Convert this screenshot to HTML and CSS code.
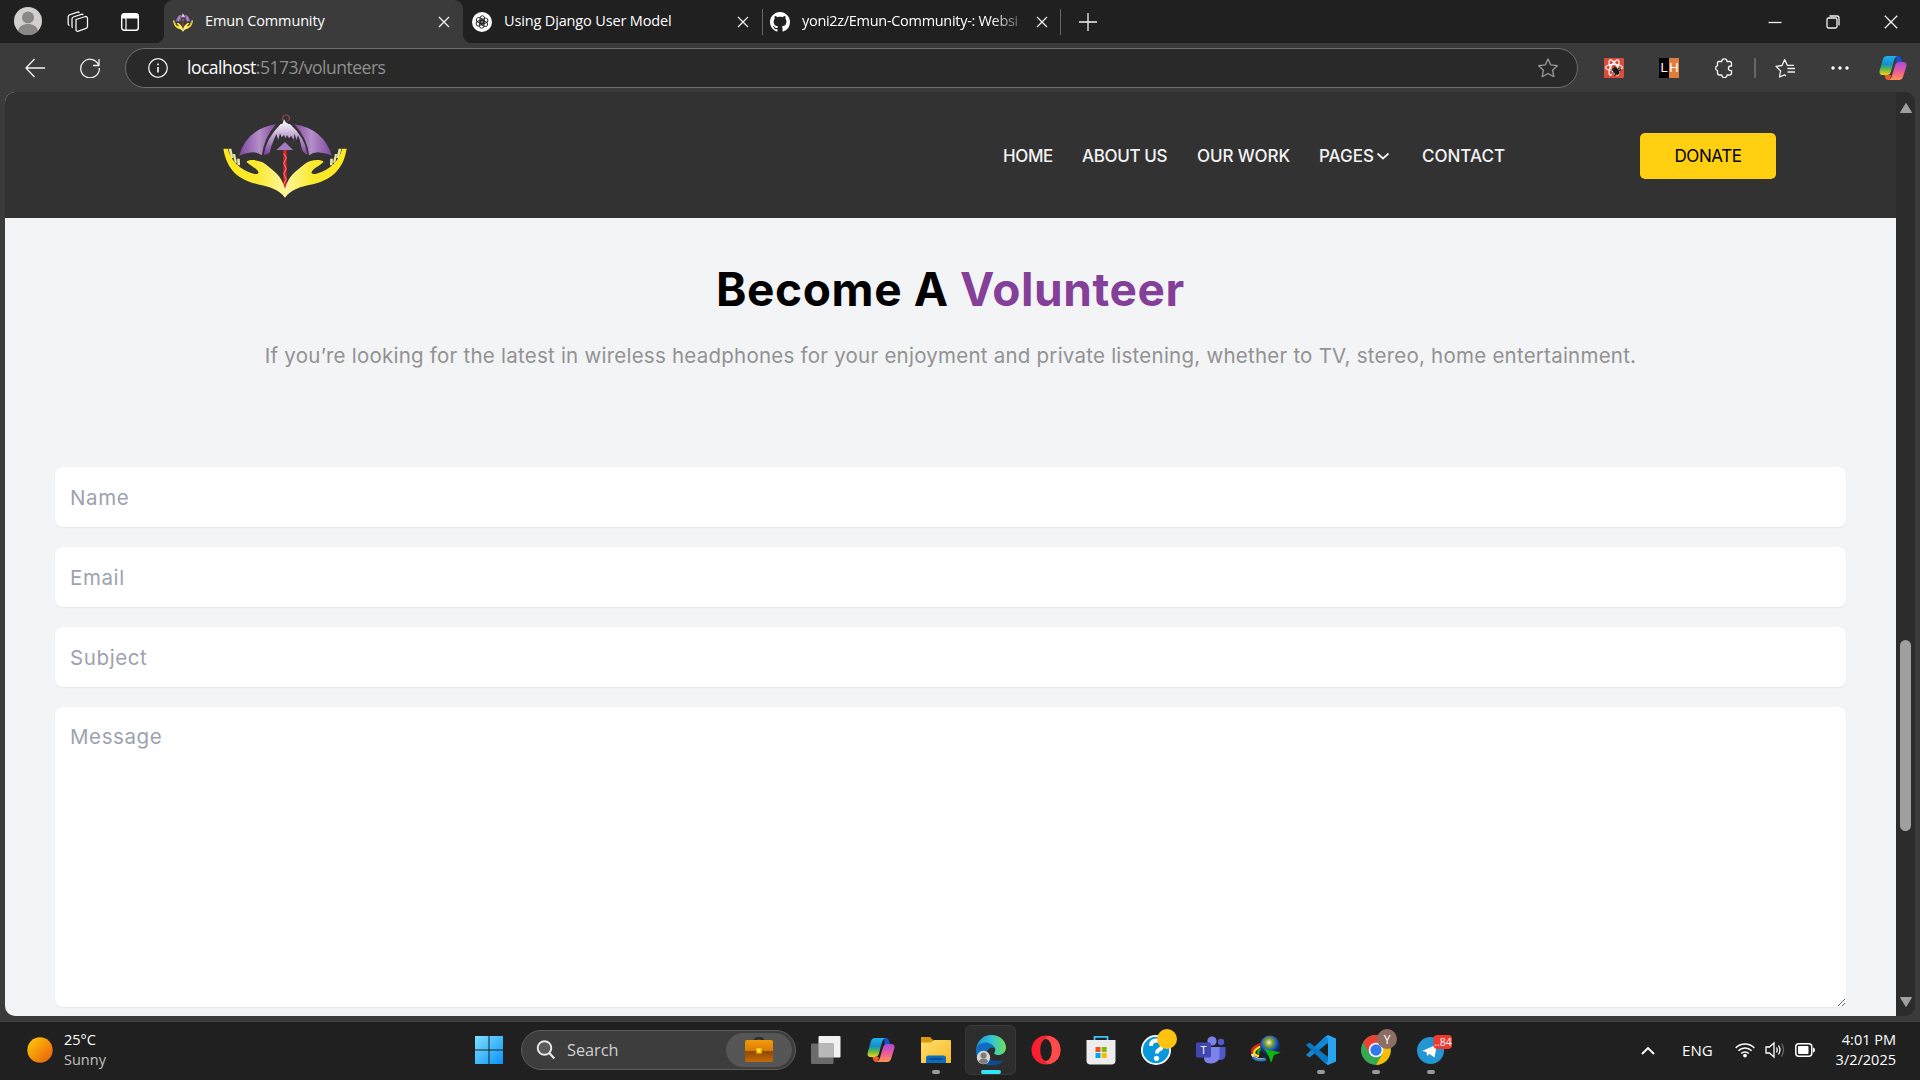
FILE: index.html
```html
<!DOCTYPE html>
<html lang="en">
<head>
<meta charset="utf-8">
<title>Emun Community</title>
<link rel="stylesheet" href="styles.css">
</head>
<body>
<svg class="defs" width="0" height="0" aria-hidden="true">
  <defs>
    <linearGradient id="panelL"><stop offset="0" stop-color="#7f45a0"/><stop offset=".55" stop-color="#b48fc8"/><stop offset="1" stop-color="#8546a0"/></linearGradient>
    <linearGradient id="panelR"><stop offset="0" stop-color="#8546a0"/><stop offset=".45" stop-color="#b48fc8"/><stop offset="1" stop-color="#7f45a0"/></linearGradient>
    <linearGradient id="crown" x2="0" y2="1"><stop offset="0" stop-color="#f2edf6"/><stop offset=".45" stop-color="#b79aca"/><stop offset="1" stop-color="#82409e"/></linearGradient>
    <linearGradient id="handL"><stop offset="0" stop-color="#ffe81a"/><stop offset=".55" stop-color="#fbe92f"/><stop offset="1" stop-color="#fff7a0"/></linearGradient>
    <linearGradient id="handR"><stop offset="0" stop-color="#fff7a0"/><stop offset=".45" stop-color="#fbe92f"/><stop offset="1" stop-color="#ffe81a"/></linearGradient>
    <linearGradient id="cpA" x2="0" y2="1"><stop offset="0" stop-color="#1cb0f0"/><stop offset=".45" stop-color="#1590c8"/><stop offset=".7" stop-color="#5fb944"/><stop offset="1" stop-color="#f5d21c"/></linearGradient>
    <linearGradient id="cpB" x2="0" y2="1"><stop offset="0" stop-color="#a54bdc"/><stop offset=".5" stop-color="#ea5a9c"/><stop offset="1" stop-color="#ff9350"/></linearGradient>
    <linearGradient id="edgeA"><stop offset="0" stop-color="#1e8fe0"/><stop offset=".5" stop-color="#2fc3d8"/><stop offset="1" stop-color="#6fe05a"/></linearGradient>
    <linearGradient id="operaG"><stop offset="0" stop-color="#ff1b2d"/><stop offset="1" stop-color="#e0353c"/></linearGradient>
    <linearGradient id="winG" x2="1" y2="1"><stop offset="0" stop-color="#7fe0ff"/><stop offset="1" stop-color="#0a93f8"/></linearGradient>
    <linearGradient id="sunG" x2="1" y2="1"><stop offset="0" stop-color="#ffcf08"/><stop offset="1" stop-color="#e8590c"/></linearGradient>
    <linearGradient id="foldG" x2="1" y2="1"><stop offset="0" stop-color="#ffdf6b"/><stop offset="1" stop-color="#f8b92c"/></linearGradient>
    <linearGradient id="bagG" x2="0" y2="1"><stop offset="0" stop-color="#f59b0a"/><stop offset=".5" stop-color="#d97a04"/><stop offset=".52" stop-color="#8f4a02"/><stop offset="1" stop-color="#c56a06"/></linearGradient>
    <radialGradient id="globeG" cx=".45" cy=".35"><stop offset="0" stop-color="#f6f3c0"/><stop offset=".4" stop-color="#7f9d2c"/><stop offset=".7" stop-color="#2a66b8"/><stop offset="1" stop-color="#0d2f78"/></radialGradient>
    <symbol id="logo" viewBox="10 10 370 252" preserveAspectRatio="none">
      <path d="M191 30c-8-8 0-18 8-17 11 1 13 14 3 18" fill="none" stroke="#9a4550" stroke-width="3.500"/>
      <path d="M192 26l5 8 8 6h-18z" fill="#eee"/>
      <path d="M58 135Q82 54 168 41 132 82 126 134 110 121 88 126 72 128 58 135z" fill="url(#panelL)"/>
      <path d="M335 135Q309 54 223 41 261 82 267 134 283 121 304 126 320 128 335 135z" fill="url(#panelR)"/>
      <path d="M182 40h28q46 42 52 92-14-2-19-26-3-20-9-32l-5 14-5-19-4 20-6-14-7 8-6-10-4 10-5-10-7 7-5-12-5 20-6-18-6 14q-10 22-13 40-4 8-18 8 6-48 50-92z" fill="url(#crown)"/>
      <path d="M218 84l14 18m-18-4l18-12m-16 18l8-24" stroke="#4a3a55" stroke-width="1.500"/>
      <path d="M195 94l24 24h-50z" fill="#a37cc0"/>
      <path d="M195 118v114" stroke="#df2024" stroke-width="10"/>
      <path d="M191 128l8 14-8 16 8 16-8 16 8 16-8 16" stroke="#ffb0a8" stroke-width="2" fill="none"/>
      <path d="M11 114h13c10 34 34 64 80 76 8 0 12-2 12-4-4-14-22-18-36-32 8-10 42-6 56 6 32 26 48 36 59 74v27c-18-26-46-32-76-39C62 210 22 182 11 114z" fill="url(#handL)"/>
      <path d="M379 114h-13c-10 34-34 64-80 76-8 0-12-2-12-4 4-14 22-18 36-32-8-10-42-6-56 6-32 26-48 36-59 74v27c18-26 46-32 76-39 57-12 97-40 108-108z" fill="url(#handR)"/>
      <path d="M26 114h9l6 28h-7zM39 130h7l6 26h-7zM52 144h8l1 20h-8zM364 114h-9l-6 28h7zM351 130h-7l-6 26h7zM338 144h-8l-1 20h8z" fill="#e9e3a0"/>
    </symbol>
    <symbol id="copilot" viewBox="0 0 28 26">
      <path d="M17 1h2c2 0 3 2 3.500 4L24 9h-6z" fill="#1a4fd0"/>
      <path d="M8 1h10c-2 1-2.600 3-3.200 5l-3 11c-.6 2-2 3-4 3H4C1 20 0 18 .7 15.500L4 4c.6-2 2-3 4-3z" fill="url(#cpA)"/>
      <path d="M11 25H9c-2 0-3-2-3.500-5H12z" fill="#e8592c"/>
      <path d="M20 25H10c2-1 2.600-3 3.200-5l3-10c.6-2 2-3 4-3H24c3 0 4 2 3.300 4.500L24 22c-.6 2-2 3-4 3z" fill="url(#cpB)"/>
    </symbol>
  </defs>
</svg>

<div class="tabs">
  <div class="tab-tools">
    <svg class="avatar" viewBox="0 0 28 28"><circle cx="14" cy="14" r="14" fill="#d2d0ce"/><circle cx="14" cy="10.500" r="6" fill="#8a8886"/><path d="M4 24c1-5 5-7 10-7s9 2 10 7a14 14 0 0 1-20 0z" fill="#8a8886"/></svg>
    <svg class="workspaces line" viewBox="0 0 22 22"><path d="M9 8.500l9.500-3a1.800 1.800 0 0 1 2 1.700v8.300a2 2 0 0 1-1.400 1.900l-7.800 2.700a1.600 1.600 0 0 1-2.300-1.600V9.500zM5.600 16.800A2 2 0 0 1 5 15.500V7.800A2 2 0 0 1 6.300 6l8-2.700q1.300-.3 2 .6M2.500 14.500A2 2 0 0 1 1.200 13V5.500A2 2 0 0 1 2.500 3.800l8-2.700q1.200-.3 2 .6"/></svg>
    <svg class="panel" viewBox="0 0 18 18"><rect x=".7" y=".7" width="16.600" height="16.600" rx="2.500" fill="none" stroke="#fff" stroke-width="1.400"/><path d="M1 1h16v4.500H1z" fill="#fff"/><path d="M5 5v12" stroke="#fff" stroke-width="1.200"/></svg>
  </div>
  <div class="tab active">
    <svg class="fav"><use href="#logo"/></svg>
    <span class="tab-title">Emun Community</span>
    <svg class="close line" viewBox="0 0 12 12"><path d="M1 1l10 10M11 1L1 11"/></svg>
  </div>
  <div class="tab">
    <svg class="fav" viewBox="0 0 20 20"><circle cx="10" cy="10" r="10" fill="#fff"/><g fill="none" stroke="#222" stroke-width=".9"><rect x="8" y="3.800" width="4.600" height="7.500" rx="2.300"/><rect x="8" y="3.800" width="4.600" height="7.500" rx="2.300" transform="rotate(60 10 10)"/><rect x="8" y="3.800" width="4.600" height="7.500" rx="2.300" transform="rotate(120 10 10)"/><rect x="8" y="3.800" width="4.600" height="7.500" rx="2.300" transform="rotate(180 10 10)"/><rect x="8" y="3.800" width="4.600" height="7.500" rx="2.300" transform="rotate(240 10 10)"/><rect x="8" y="3.800" width="4.600" height="7.500" rx="2.300" transform="rotate(300 10 10)"/></g></svg>
    <span class="tab-title">Using Django User Model</span>
    <svg class="close line" viewBox="0 0 12 12"><path d="M1 1l10 10M11 1L1 11"/></svg>
  </div>
  <div class="tab bordered">
    <svg class="fav" viewBox="0 0 16 16"><path fill="#fff" d="M8 0C3.580 0 0 3.580 0 8c0 3.540 2.290 6.530 5.470 7.590.4.070.55-.17.55-.38 0-.19-.01-.82-.01-1.490-2.010.37-2.530-.49-2.690-.94-.09-.23-.48-.94-.82-1.130-.28-.15-.68-.52-.01-.53.63-.01 1.080.58 1.230.82.72 1.210 1.870.87 2.330.66.07-.52.28-.87.51-1.070-1.780-.2-3.640-.89-3.640-3.950 0-.87.31-1.590.82-2.150-.08-.2-.36-1.020.08-2.120 0 0 .67-.21 2.200.82.64-.18 1.320-.27 2-.27s1.360.09 2 .27c1.530-1.040 2.200-.82 2.200-.82.44 1.100.16 1.920.08 2.120.51.56.82 1.270.82 2.150 0 3.070-1.870 3.750-3.650 3.950.29.25.54.73.54 1.480 0 1.070-.01 1.930-.01 2.200 0 .21.150.46.55.38A8.010 8.010 0 0 0 16 8c0-4.420-3.580-8-8-8z"/></svg>
    <span class="tab-title fade">yoni2z/Emun-Community-: Websi</span>
    <svg class="close line" viewBox="0 0 12 12"><path d="M1 1l10 10M11 1L1 11"/></svg>
  </div>
  <div class="new-tab"><svg class="line" width="18" height="18" viewBox="0 0 18 18"><path d="M9 0v18M0 9h18"/></svg></div>
  <div class="window-buttons">
    <svg class="line" viewBox="0 0 14 14"><path d="M.5 7.500h13"/></svg>
    <svg class="line" viewBox="0 0 14 14"><rect x="1" y="3" width="10" height="10" rx="1.500"/><path d="M3.500 1H11q2 0 2 2v7.500"/></svg>
    <svg class="line" viewBox="0 0 14 14"><path d="M.8.8l12.400 12.400M13.200.8L.8 13.200"/></svg>
  </div>
</div>

<div class="toolbar">
  <svg class="back line" viewBox="0 0 20 20"><path d="M9.500 1L1 10l8.500 9M1 10h19"/></svg>
  <svg class="reload line" viewBox="0 0 20 20"><path d="M18.800 7.500A9.300 9.300 0 1 0 19.300 10M19 1v6.500h-6"/></svg>
  <div class="url">
    <svg class="info line" viewBox="0 0 20 20"><circle cx="10" cy="10" r="9.300"/><path d="M10 9v5.500M10 5.500v1.700" stroke-width="1.700"/></svg>
    <span class="address"><b>localhost</b>:5173/volunteers</span>
    <svg class="star" viewBox="0 0 20 20"><path d="M10 .9l2.800 6 6.500.8-4.800 4.500 1.300 6.500L10 15.500l-5.800 3.200 1.300-6.500L.7 7.700l6.500-.8z" fill="none" stroke="#9a9a9a" stroke-width="1.300" stroke-linejoin="round"/></svg>
  </div>
  <svg class="ext react" viewBox="0 0 20 20"><rect width="20" height="20" rx="1" fill="#dd4b39"/><g fill="none" stroke="#fff" stroke-width="1.200"><ellipse cx="10" cy="9.500" rx="8.500" ry="3.200"/><ellipse cx="10" cy="9.500" rx="8.500" ry="3.200" transform="rotate(60 10 9.500)"/><ellipse cx="10" cy="9.500" rx="8.500" ry="3.200" transform="rotate(120 10 9.500)"/></g><ellipse cx="12" cy="13" rx="2.800" ry="4.300" fill="#1a1a1a" transform="rotate(-35 12 13)"/><path d="M6.500 12h11M8 16.500l7-6.500M10 18l7-7" stroke="#1a1a1a"/></svg>
  <div class="ext lh"><span>L</span><span>H</span></div>
  <svg class="ext puzzle line" viewBox="0 0 20 20"><path d="M4.500 3.500h3.300a2.600 2.600 0 0 1 5.200 0h2.500q2 0 2 2V8h-.8a2.300 2.300 0 0 0 0 4.600h.8v2.400q0 2-2 2H13a2.600 2.600 0 0 1-5.200 0H5.500q-2 0-2-2v-2.300a2.600 2.600 0 0 1 0-5V5q0-1.500 1-1.500z"/></svg>
  <i class="sep"></i>
  <svg class="ext favs line" viewBox="0 0 20 20"><path d="M11 18l-1.500-1.200-5 2.200 1.100-6L1 8.300l6-.8 2.700-6 2.600 5.800H19M12.500 10.500H20M12.500 14H20"/></svg>
  <svg class="dots" viewBox="0 0 18 4"><g fill="#fff"><circle cx="2" cy="2" r="1.700"/><circle cx="9" cy="2" r="1.700"/><circle cx="16" cy="2" r="1.700"/></g></svg>
  <svg class="copilot"><use href="#copilot"/></svg>
</div>

<div class="frame">
  <div class="page">
    <header class="header">
      <svg class="logo"><use href="#logo"/></svg>
      <nav class="nav">
        <a class="home">HOME</a>
        <a class="about">ABOUT US</a>
        <a class="work">OUR WORK</a>
        <a class="pages">PAGES<svg width="14" height="8" viewBox="0 0 14 8"><path d="M1.500 1.500L7 6.500l5.500-5" fill="none" stroke="#f4f4f4" stroke-width="1.700"/></svg></a>
        <a class="contact">CONTACT</a>
      </nav>
      <button class="donate">DONATE</button>
    </header>
    <main class="content">
      <h1 class="title">Become A <span class="accent">Volunteer</span></h1>
      <p class="lead">If you’re looking for the latest in wireless headphones for your enjoyment and private listening, whether to TV, stereo, home entertainment.</p>
      <form class="form">
        <input class="field" placeholder="Name">
        <input class="field" placeholder="Email">
        <input class="field" placeholder="Subject">
        <textarea class="field area" placeholder="Message"></textarea>
      </form>
    </main>
  </div>
  <div class="scrollbar">
    <svg width="12" height="10" viewBox="0 0 12 10"><path d="M6 .5L11.500 9.500H.5z" fill="#9f9f9f" stroke="#9f9f9f" stroke-linejoin="round"/></svg>
    <i class="thumb"></i>
    <svg width="12" height="10" viewBox="0 0 12 10"><path d="M6 9.500L11.500.5H.5z" fill="#9f9f9f" stroke="#9f9f9f" stroke-linejoin="round"/></svg>
  </div>
</div>

<footer class="taskbar">
  <div class="weather">
    <svg width="26" height="26" viewBox="0 0 26 26"><circle cx="13" cy="13" r="12.700" fill="url(#sunG)"/></svg>
    <div><span>25°C</span><span class="sky">Sunny</span></div>
  </div>
  <div class="apps">
    <div class="app start"><svg width="30" height="30" viewBox="0 0 30 30"><path d="M1 1h13.500v13.500H1zM15.500 1H29v13.500H15.500zM1 15.500h13.500V29H1zM15.500 15.500H29V29H15.500z" fill="url(#winG)"/></svg></div>
    <div class="search">
      <svg width="20" height="20" viewBox="0 0 20 20"><circle cx="8.500" cy="8" r="6.800" fill="#5a5a5a" stroke="#e8e8e8" stroke-width="1.900"/><path d="M13.300 13l5 5.500" stroke="#e8e8e8" stroke-width="2.200"/></svg>
      <span class="hint">Search</span>
      <div class="bag"><svg width="30" height="26" viewBox="0 0 30 26"><path d="M11 4q0-3 4-3t4 3" fill="none" stroke="#2c2c2c" stroke-width="2.500"/><rect x="1" y="3" width="28" height="22" rx="2" fill="url(#bagG)"/><rect x="12.300" y="11" width="5.500" height="5.500" fill="#ffc400"/><rect x="14" y="12.500" width="2" height="2" fill="#fff3a0"/></svg></div>
    </div>
    <div class="app"><svg width="30" height="30" viewBox="0 0 30 30"><rect x="7.500" y="1" width="22" height="21.500" rx="1" fill="#f2f2f2"/><rect x="0" y="8.500" width="22.500" height="20.500" rx="1" fill="#6b6b6b"/><path d="M7.500 8.500h15v14h-15z" fill="#b9b9b9"/></svg></div>
    <div class="app"><svg width="28" height="26"><use href="#copilot"/></svg></div>
    <div class="app run"><svg width="30" height="30" viewBox="0 0 30 30"><path d="M0 2h9l3 3v5H0z" fill="#dc9a06"/><path d="M0 7.500h10L13 5h16q1 0 1 1v21.500q0 .5-.5.500H.5q-.5 0-.5-.5z" fill="url(#foldG)"/><path d="M5 28v-5q0-2.500 2.500-2.500h15Q25 20.500 25 23v5z" fill="#0f6cbd"/><path d="M8.500 24h13" stroke="#083d73" stroke-width="1.200"/></svg></div>
    <div class="app current"><svg width="30" height="30" viewBox="0 0 30 30"><path d="M0 15C1 6 7 0 15.500 0 24 0 30 6 30 12.500c0 5-4 7.500-7.500 7.500-3 0-5-1-4-2.500 2-3 0-7.500-5-7.500C7 9.500 2 12 0 18z" fill="url(#edgeA)"/><path d="M0 15c1-5.500 6-8.500 12.500-7 3 .7 5.500 3 5.500 5-5-1-8 3-7 7.500.7 3 3 5.500 7 6.500 3.500 1 7 0 9-1.500C24 29 20 30 15 30 5 30-.5 23 0 15z" fill="#0f6cbf"/><path d="M12 21c1 4 6 6 15 4.500C24 29 19 31 13 29.500z" fill="#0b4a9c"/><circle cx="7.500" cy="22.500" r="6.700" fill="#d6d4d2"/><circle cx="7.500" cy="20.500" r="3" fill="#7e7c7a"/><path d="M3 27q0-3.500 4.500-3.500T12 27q-4.500 4-9 0z" fill="#7e7c7a"/></svg></div>
    <div class="app"><svg width="30" height="30" viewBox="0 0 30 30"><ellipse cx="15" cy="15" rx="14.500" ry="14.500" fill="url(#operaG)"/><path d="M19 1Q29.500 4 29.500 15T19 29q-6-1-4-4 5-2 5-10T15 5q-2-3 4-4z" fill="#ff4b4b"/><ellipse cx="15" cy="15" rx="5.800" ry="11" fill="#202020"/></svg></div>
    <div class="app"><svg width="30" height="30" viewBox="0 0 30 30"><path d="M8.500 6V1.800h13V6" fill="none" stroke="#3cc4f4" stroke-width="1.800"/><path d="M.5 5h29v20.500q0 4-4 4H4.500q-4 0-4-4z" fill="#ededed"/><path d="M9.500 12h5v5h-5z" fill="#f25022"/><path d="M15.700 12h5v5h-5z" fill="#7fba00"/><path d="M9.500 18h5v5h-5z" fill="#00a4ef"/><path d="M15.700 18h5v5h-5z" fill="#ffb900"/></svg></div>
    <div class="app"><svg class="help" width="36" height="36" viewBox="0 0 36 36"><circle cx="15" cy="21" r="15" fill="#fff"/><circle cx="15" cy="21" r="13.200" fill="#0a98dc"/><path d="M10 17q0-5.500 5.500-5.500T21 16.500q0 3-3 4.300-2 1-2 3.700" fill="none" stroke="#fff" stroke-width="3.800"/><circle cx="15.500" cy="29.300" r="2.600" fill="#fff"/><circle cx="26" cy="10" r="10" fill="#ffc20e"/></svg></div>
    <div class="app"><svg width="30" height="30" viewBox="0 0 30 30"><circle cx="25" cy="7" r="3.200" fill="#5059c9"/><circle cx="16" cy="6" r="4.600" fill="#7b83eb"/><path d="M21 12h8.500v8q0 4-4.500 5h-4z" fill="#5059c9"/><path d="M8 12h15.500v9q0 7-8 7.500T8 22z" fill="#7b83eb"/><rect x="0" y="7.500" width="15" height="15" rx="1.500" fill="#4048b0"/><text x="7.500" y="19" class="glyph" font-size="11">T</text></svg></div>
    <div class="app"><svg width="30" height="30" viewBox="0 0 30 30"><g fill="none" stroke-width="2.400"><path d="M10 9C-2 13-2 21 7 22.500" stroke="#e0251b"/><path d="M11 11C1 15 1 20 8 21" stroke="#f6e01a"/><path d="M12 13q-7 3-4 6" stroke="#1ca02c"/><path d="M1 19q3 7 13 5" stroke="#eee8b0"/><path d="M2 22q4 5 13 2" stroke="#2a7fd0"/></g><circle cx="19" cy="10.500" r="10" fill="url(#globeG)"/><path d="M13 14l17 3.500-7 2.500-3 8q-2-8-7-14z" fill="#0db80d"/></svg></div>
    <div class="app run"><svg width="30" height="30" viewBox="0 0 30 30"><path d="M22 0v8L3.500 22.500 0 20l18-17.500z" fill="#1287d4"/><path d="M22 30v-8L3.500 7.500 0 10l18 17.500z" fill="#0a78c2"/><path d="M22 0l8 3.500v23L22 30l-3-2.500q3 1 3-2v-21q0-3-3-2z" fill="#28a4f0"/></svg></div>
    <div class="app run"><svg class="chrome" width="36" height="36" viewBox="0 0 36 36"><circle cx="15" cy="21" r="15" fill="#34a853"/><path d="M15 21L2 13.500A15 15 0 0 1 28 13.500z" fill="#ea4335"/><path d="M2 13.500l7 11.500 6-4V14h13A15 15 0 0 0 2 13.500z" fill="#ea4335"/><path d="M15 14h13a15 15 0 0 1-13 22l6.500-11z" fill="#fbbc05"/><circle cx="15" cy="21" r="7.300" fill="#fff"/><circle cx="15" cy="21" r="5.700" fill="#2f7bed"/><circle cx="26" cy="10" r="10" fill="#8d6e63"/><text x="26" y="14.500" class="glyph" font-size="12">Y</text></svg></div>
    <div class="app run"><svg class="tg" width="35" height="30" viewBox="0 0 35 30"><circle cx="13.500" cy="15.500" r="13.500" fill="#2496d4"/><path d="M5 16L20 9.500l-2.500 13-5-3.500-2.500 2-.5-4z" fill="#fff"/><rect x="16.500" y="0" width="18.500" height="14" rx="4" fill="#f2392f"/><text x="26" y="11" class="glyph" font-size="10.500">..84</text></svg></div>
  </div>
  <div class="tray">
    <svg width="14" height="9" viewBox="0 0 14 9"><path d="M1 8l6-6 6 6" fill="none" stroke="#fff" stroke-width="1.900"/></svg>
    <span class="lang">ENG</span>
    <svg class="wifi" width="20" height="16" viewBox="0 0 20 16"><g fill="none" stroke="#fff" stroke-width="1.500"><path d="M.7 6a13 13 0 0 1 18.600 0M3.400 8.800a9.200 9.200 0 0 1 13.200 0M6.200 11.500a5.300 5.300 0 0 1 7.600 0"/></g><circle cx="10" cy="13.600" r="1.900" fill="#fff"/></svg>
    <svg class="sound" width="20" height="18" viewBox="0 0 20 18"><g fill="none" stroke="#fff" stroke-width="1.300"><path d="M1 6h3.500L9 2v14L4.500 12H1z"/><path d="M11.500 6.500q1.500 2.500 0 5M13.500 4.500q3 4.500 0 9"/><path d="M16.500 2.500q4 6.500 0 13" stroke="#666"/></g></svg>
    <svg class="battery" width="20" height="14" viewBox="0 0 20 14"><rect x=".8" y=".8" width="16" height="12.400" rx="3" fill="none" stroke="#fff" stroke-width="1.500"/><rect x="3" y="3" width="10.500" height="8" rx="1" fill="#fff"/><path d="M18 4.500q2 0 2 2.500t-2 2.500z" fill="#fff"/></svg>
    <div class="clock"><span>4:01 PM</span><span>3/2/2025</span></div>
  </div>
</footer>
</body>
</html>
```
FILE: styles.css
```css
* { box-sizing: border-box; }
body {
  margin: 0;
  width: 1920px;
  height: 1080px;
  overflow: hidden;
  display: flex;
  flex-direction: column;
  background: #3b3b3b;
  color: #fff;
  font-family: "Open Sans", "Noto Sans", sans-serif;
}
svg { display: block; flex: none; }
.defs { position: absolute; }
.line { fill: none; stroke: #f2f2f2; stroke-width: 1.3; stroke-linejoin: round; }

/* Tab strip */
.tabs { height: 43px; flex: none; display: flex; background: #202020; }
.tab-tools { width: 164px; display: flex; align-items: center; padding-left: 14px; }
.avatar { width: 28px; height: 28px; margin-top: -1px; }
.workspaces { width: 22px; height: 22px; margin-left: 25px; }
.panel { width: 18px; height: 18px; margin-left: 32px; }
.tab { position: relative; width: 299px; display: flex; align-items: center; padding: 0 13px 0 9px; font-size: 14.500px; letter-spacing: -.15px; }
.tab.active { background: #3b3b3b; border-radius: 9px 9px 0 0; }
.tab.active::before, .tab.active::after { content: ""; position: absolute; bottom: 0; width: 9px; height: 9px; }
.tab.active::before { left: -9px; background: radial-gradient(circle at 0 0, #202020 9px, #3b3b3b 9.500px); }
.tab.active::after { right: -9px; background: radial-gradient(circle at 100% 0, #202020 9px, #3b3b3b 9.500px); }
.tab.bordered { border-left: 1px solid #666; border-right: 1px solid #666; height: 26px; margin-top: 9px; padding: 0 12px 0 7px; letter-spacing: -.3px; }
.fav { width: 20px; height: 20px; }
.tab-title { flex: 1; margin-left: 12px; white-space: nowrap; line-height: 20px; padding-bottom: 2px; }
.fade { -webkit-mask-image: linear-gradient(90deg, #000 85%, rgba(0, 0, 0, .15)); mask-image: linear-gradient(90deg, #000 85%, rgba(0, 0, 0, .15)); }
.tab .close { width: 12px; height: 12px; margin-left: 12px; }
.new-tab { width: 54px; display: flex; align-items: center; justify-content: center; }
.window-buttons { margin-left: auto; display: flex; align-items: center; gap: 44px; padding-right: 22px; }
.window-buttons svg { width: 14px; height: 14px; }

/* Address bar */
.toolbar { height: 49px; flex: none; display: flex; align-items: center; padding-left: 25px; }
.back { width: 20px; height: 20px; }
.reload { width: 20px; height: 20px; margin-left: 35px; }
.url { width: 1453px; height: 40px; margin-left: 25px; display: flex; align-items: center; padding: 0 19px 0 22px; border: 1px solid #6e6e6e; border-radius: 20px; background: #292929; }
.info { width: 20px; height: 20px; }
.address { margin-left: 19px; padding-bottom: 2px; flex: 1; font-size: 17.500px; letter-spacing: -.5px; color: #8f8f8f; white-space: nowrap; }
.address b { font-weight: 400; color: #fff; }
.star { width: 20px; height: 20px; }
.ext { width: 20px; height: 20px; margin-left: 35px; }
.ext.react { margin-left: 26px; }
.lh { display: flex; background: #000; font: 13px/20px "Liberation Sans", sans-serif; text-align: center; }
.lh span { flex: 1; }
.lh span + span { background: #e07f3c; }
.sep { width: 2px; height: 20px; margin-left: 20px; background: #666; }
.ext.favs { margin-left: 19px; }
.dots { width: 18px; height: 4px; margin-left: 36px; }
.copilot { width: 28px; height: 26px; margin-left: 30px; }

/* Web page */
.frame { height: 924px; flex: none; margin: 0 5px; display: flex; border-radius: 10px; overflow: hidden; }
.page { width: 1891px; display: flex; flex-direction: column; background: #f3f4f6; font-family: Inter, sans-serif; }
.header { height: 126px; flex: none; display: flex; align-items: center; background: #323232; padding: 2px 120px 0 218px; }
.logo { width: 124px; height: 84px; margin-bottom: 1px; }
.nav { display: flex; margin-left: 656px; font-size: 17px; font-weight: 500; line-height: 24px; color: #f4f4f4; white-space: nowrap; }
.nav a { display: flex; align-items: center; }
.nav svg { margin-left: 2px; }
.home { width: 79px; letter-spacing: -.4px; }
.about { width: 115px; letter-spacing: -.35px; }
.work { width: 122px; letter-spacing: -.1px; }
.pages { width: 103px; }
.donate { margin-left: auto; width: 136px; height: 46px; padding: 0; border: 0; border-radius: 5px; background: #ffcf11; color: #000; font: 400 17px Inter, sans-serif; letter-spacing: -.4px; white-space: nowrap; }
.content { flex: 1; padding: 35px 50px 0; }
.title { margin: 0; text-align: center; font-size: 46px; line-height: 72px; font-weight: 700; letter-spacing: .6px; color: #000; }
.accent { color: #843f98; }
.lead { margin: 15px 0 95px; text-align: center; font-size: 20.500px; line-height: 32px; letter-spacing: .235px; color: #929292; white-space: nowrap; }
.form { display: flex; flex-direction: column; gap: 20px; }
.field { display: block; width: 100%; height: 60px; margin: 0; padding: 15px; border: 0; border-radius: 8px; outline: 0; background: #fff; color: #111; box-shadow: 0 1px 2px rgba(0, 0, 0, .06); font: 400 20.500px/30px Inter, sans-serif; letter-spacing: .6px; }
.field::placeholder { color: #9ca3af; opacity: 1; }
.area { height: 300px; resize: vertical; }
.scrollbar { flex: 1; display: flex; flex-direction: column; align-items: center; background: #2c2c2c; padding: 11px 0 9px; }
.thumb { width: 11px; height: 191px; margin: 527px 0 auto; border-radius: 6px; background: #9f9f9f; }

/* Taskbar */
.taskbar { height: 59px; margin-top: auto; padding-bottom: 2px; display: flex; align-items: center; background: #202020; border-top: 1px solid #424242; }
.weather { width: 462px; padding-left: 27px; display: flex; align-items: center; gap: 11px; }
.weather div, .clock { display: flex; flex-direction: column; font-size: 14.500px; line-height: 20px; }
.weather span, .clock span { white-space: nowrap; }
.weather div { align-items: flex-start; }
.sky { color: #c0c0c0; }
.apps { display: flex; align-items: center; }
.app { position: relative; width: 55px; height: 50px; display: flex; align-items: center; justify-content: center; }
.app.start { width: 54px; }
.search { width: 275px; height: 40px; margin: 0 2px 0 5px; display: flex; align-items: center; padding: 0 3px 0 14px; border: 1px solid #5c5c5c; border-radius: 20px; background: #3d3d3d; }
.hint { margin-left: 11px; font-size: 16.300px; color: #d0d0d0; }
.bag { margin-left: auto; width: 66px; height: 34px; border-radius: 17px; background: #565656; display: flex; align-items: center; justify-content: center; }
.app.current::before { content: ""; position: absolute; inset: 0 2px; border-radius: 6px; border: 1px solid #393939; background: #2d2d2d; }
.app.current svg { position: relative; }
.app.run::after, .app.current::after { content: ""; position: absolute; bottom: 1px; width: 8px; height: 4px; border-radius: 2px; background: #9a9a9a; }
.app.current::after { width: 20px; background: #2ee6f6; }
.help, .chrome { margin: -6px 0 0 6px; }
.tg { margin-left: 8px; }
.glyph { fill: #fff; font-family: "Open Sans", sans-serif; text-anchor: middle; }
.tray { margin-left: auto; padding-right: 24px; display: flex; align-items: center; }
.lang { margin-left: 27px; font-size: 15px; }
.wifi { margin-left: 22px; }
.sound { margin-left: 10px; }
.battery { margin-left: 10px; }
.clock { margin-left: 21px; align-items: flex-end; }
```
